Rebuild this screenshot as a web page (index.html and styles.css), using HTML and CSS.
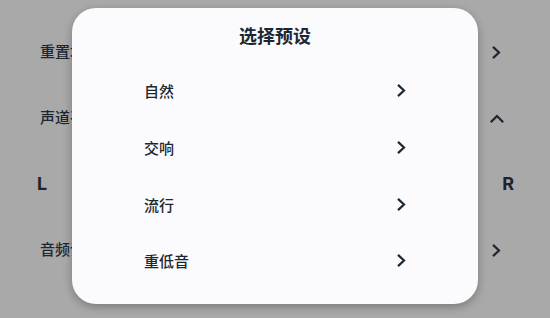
FILE: index.html
```html
<!DOCTYPE html>
<html lang="zh">
<head>
<meta charset="utf-8">
<link rel="stylesheet" href="styles.css">
</head>
<body>
<div class="page">
  <div class="row">
    <span class="label">重置均衡器</span>
    <svg class="chev" width="9" height="13" viewBox="0 0 9 13"><path d="M1.8 1.6 L7 6.5 L1.8 11.4" /></svg>
  </div>
  <div class="row">
    <span class="label">声道平衡</span>
    <svg class="chev up" width="14" height="9" viewBox="0 0 14 9"><path d="M1.6 7.4 L7 2 L12.4 7.4" /></svg>
  </div>
  <div class="row lr">
    <span class="side">L</span>
    <span class="side">R</span>
  </div>
  <div class="row">
    <span class="label">音频设置</span>
    <svg class="chev" width="9" height="13" viewBox="0 0 9 13"><path d="M1.8 1.6 L7 6.5 L1.8 11.4" /></svg>
  </div>
</div>

<div class="dialog">
  <div class="title">选择预设</div>
  <div class="item"><span>自然</span><svg class="chev" width="9" height="13" viewBox="0 0 9 13"><path d="M1.8 1.6 L7 6.5 L1.8 11.4" /></svg></div>
  <div class="item"><span>交响</span><svg class="chev" width="9" height="13" viewBox="0 0 9 13"><path d="M1.8 1.6 L7 6.5 L1.8 11.4" /></svg></div>
  <div class="item"><span>流行</span><svg class="chev" width="9" height="13" viewBox="0 0 9 13"><path d="M1.8 1.6 L7 6.5 L1.8 11.4" /></svg></div>
  <div class="item"><span>重低音</span><svg class="chev" width="9" height="13" viewBox="0 0 9 13"><path d="M1.8 1.6 L7 6.5 L1.8 11.4" /></svg></div>
</div>
</body>
</html>
```

FILE: styles.css
```css
html, body {
  margin: 0;
  padding: 0;
}
body {
  width: 550px;
  height: 318px;
  overflow: hidden;
  position: relative;
  background: #a9a9aa;
  font-family: "Noto Sans CJK SC", "Noto Sans", sans-serif;
  color: #1d2731;
}
.page {
  display: flex;
  flex-direction: column;
  padding-top: 18px;
}
.row {
  height: 66px;
  display: flex;
  align-items: center;
  justify-content: space-between;
  padding: 0 49px 0 40px;
}
.row .label {
  font-size: 15px;
  font-weight: 500;
  position: relative;
  top: -1px;
}
.row.lr {
  padding: 0 36px 0 37px;
}
.side {
  font-family: "Inter", "Roboto", sans-serif;
  font-size: 18px;
  font-weight: 700;
  color: #1c242c;
}
.chev path {
  fill: none;
  stroke: #1d2731;
  stroke-width: 2.2;
  stroke-linecap: square;
  stroke-linejoin: miter;
}
.row .chev {
  position: relative;
  top: 1px;
}
.row .chev.up {
  margin-right: -3px;
}
.dialog {
  position: absolute;
  left: 72px;
  top: 8px;
  width: 406px;
  height: 296px;
  background: #fbfbfd;
  border-radius: 24px;
  box-shadow: 0 3px 10px rgba(0, 0, 0, 0.28);
  display: flex;
  flex-direction: column;
}
.title {
  height: 54.5px;
  display: flex;
  align-items: center;
  justify-content: center;
  font-size: 18px;
  font-weight: 700;
  color: #1d2731;
}
.item {
  height: 56.7px;
  display: flex;
  align-items: center;
  justify-content: space-between;
  padding: 0 72px 0 72px;
  font-size: 15px;
  font-weight: 500;
}
```
